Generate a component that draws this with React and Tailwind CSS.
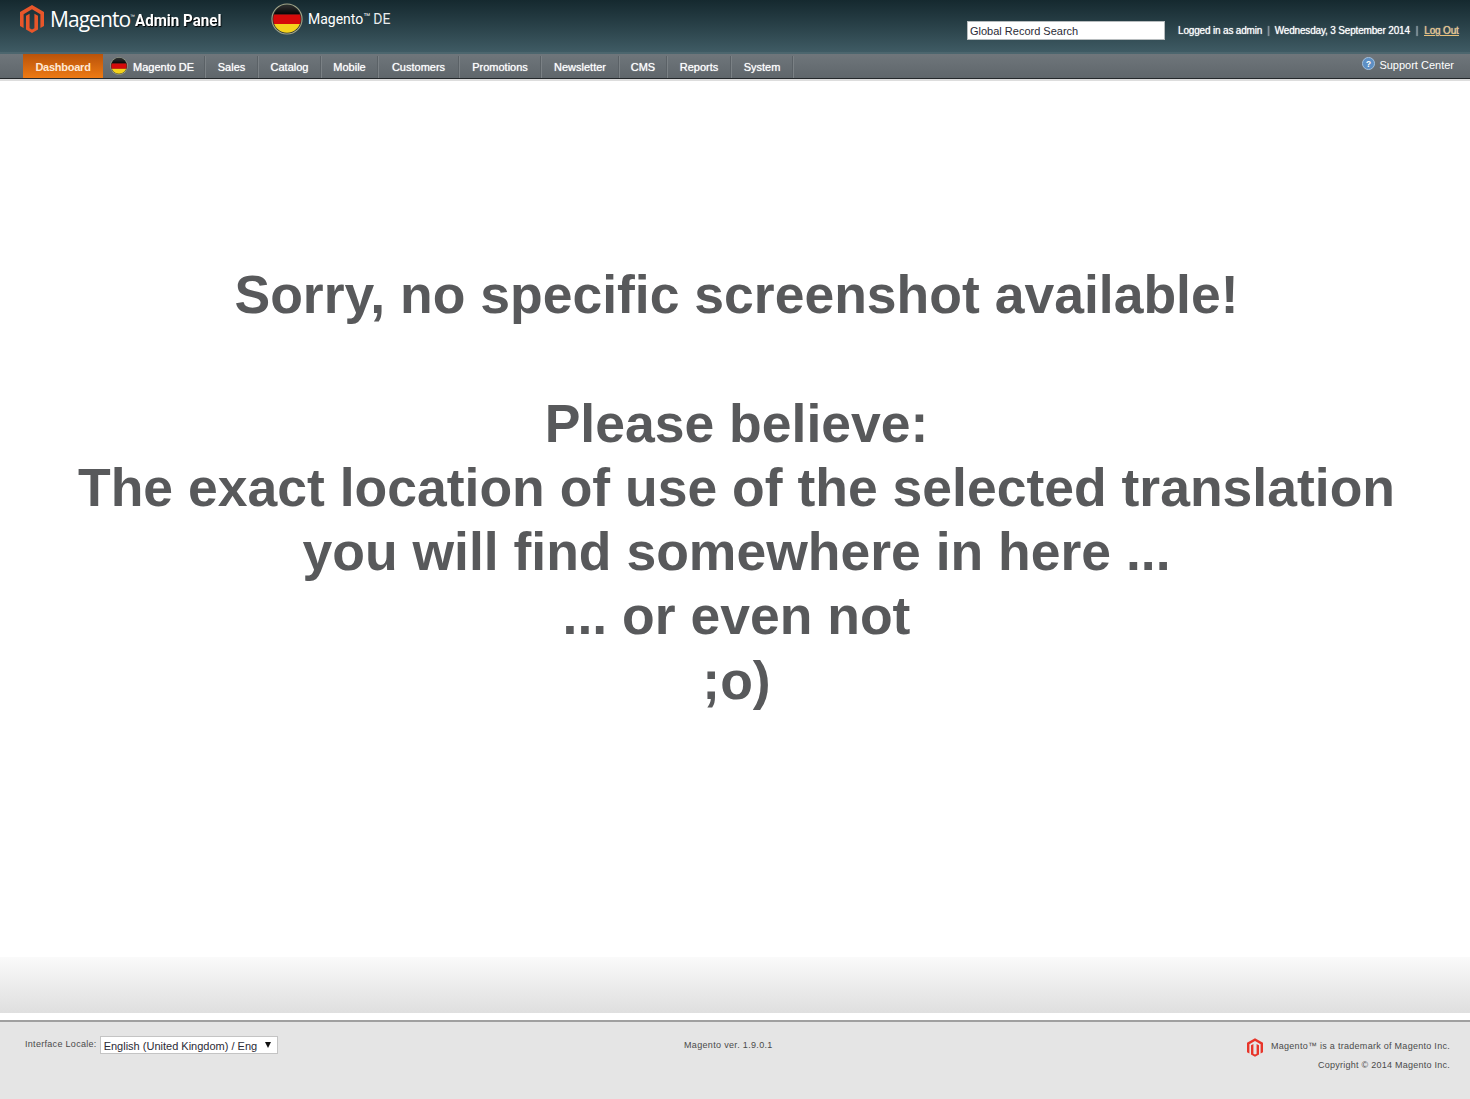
const F = "font-['Liberation_Sans',Arial,sans-serif]";

function MagentoMark({ className, color }) {
  return (
    <svg viewBox="0 0 24 28" className={className}>
      <path fill={color} d="M12 0 L24 7 V21 L20.4 23.1 V9.2 L12 4.3 L3.6 9.2 V23.1 L0 21 V7 Z" />
      <path fill={color} d="M6 10.8 L9.6 8.8 V23.2 L12 24.6 L14.4 23.2 V8.8 L18 10.8 V24.5 L12 28 L6 24.5 Z" />
    </svg>
  );
}

function Flag({ className, id }) {
  return (
    <svg viewBox="0 0 32 32" className={className}>
      <defs>
        <clipPath id={id}><circle cx="16" cy="16" r="13.8" /></clipPath>
        <linearGradient id={id + "g"} x1="0" y1="0" x2="0" y2="1">
          <stop offset="0" stopColor="#ffffff" stopOpacity="0.2" />
          <stop offset="0.35" stopColor="#ffffff" stopOpacity="0" />
        </linearGradient>
      </defs>
      <circle cx="16" cy="16" r="15.6" fill="#a3a58a" />
      <circle cx="16" cy="16" r="14.5" fill="#26302c" />
      <g clipPath={`url(#${id})`}>
        <rect x="0" y="0" width="32" height="11.5" fill="#070707" />
        <rect x="0" y="11.5" width="32" height="9.5" fill="#d50a0a" />
        <rect x="0" y="21" width="32" height="11" fill="#f4d21c" />
        <rect x="0" y="0" width="32" height="32" fill={`url(#${id}g)`} />
      </g>
    </svg>
  );
}

const navItems = [
  ["Sales", "w-[51px]"],
  ["Catalog", "w-[61px]"],
  ["Mobile", "w-[55px]"],
  ["Customers", "w-[79px]"],
  ["Promotions", "w-[80px]"],
  ["Newsletter", "w-[76px]"],
  ["CMS", "w-[46px]"],
  ["Reports", "w-[62px]"],
  ["System", "w-[60px]"],
];

const Sep = () => <div className="w-[2px] h-[22px] self-end bg-gradient-to-r from-[#4b5257] to-[#8b9195]" />;

export default function App() {
  return (
    <div className={`${F} w-[1470px] h-[1099px] bg-white flex flex-col overflow-hidden`}>
      <header className="h-[52px] shrink-0 bg-gradient-to-b from-[#15292f] to-[#3f5b64] flex">
        <div className="w-[271px] shrink-0 flex items-start pl-[20px] pt-[5px]">
          <MagentoMark className="w-[24px] h-[28px]" color="#e8562a" />
          <span className="ml-[6px] mt-[2px] text-[21px] leading-[24px] tracking-[-0.95px] text-white font-['Open_Sans',sans-serif]">Magento</span>
          <span className="text-[5px] leading-[8px] text-white mt-[7px]">™</span>
          <span className="mt-[6px] text-[16px] leading-[20px] font-bold text-white font-['Roboto',sans-serif] [text-shadow:1px_1px_1px_#000] scale-x-[0.945] origin-left whitespace-nowrap">Admin Panel</span>
        </div>
        <div className="flex items-start pt-[3px] w-[696px] shrink-0">
          <Flag className="w-[32px] h-[32px]" id="f1" />
          <span className="ml-[5px] mt-[6px] text-[14px] leading-[20px] text-white font-['Roboto',sans-serif]">Magento</span>
          <span className="text-[7px] leading-[10px] text-white mt-[8px]">™</span>
          <span className="ml-[3px] mt-[6px] text-[14px] leading-[20px] text-[#e8eced] font-['Roboto',sans-serif]">DE</span>
        </div>
        <div className="w-[198px] h-[19px] mt-[21px] shrink-0 bg-white border border-[#b7bcbe] pl-[2px] text-[11px] leading-[18px] text-[#2b2b36]">Global Record Search</div>
        <div className="ml-[13px] mt-[24px] flex items-start text-[10px] leading-[13px] tracking-[-0.17px] whitespace-nowrap text-white [text-shadow:0_0_1px_#dfe8ea]">
          <span>Logged in as admin</span>
          <span className="mx-[5px] text-[#7f9198]">|</span>
          <span>Wednesday, 3 September 2014</span>
          <span className="mx-[6px] text-[#7f9198]">|</span>
          <span className="text-[#eabf78] underline">Log Out</span>
        </div>
      </header>

      <div className="h-[2px] shrink-0 bg-[#4c666e]" />

      <nav className="h-[24px] shrink-0 bg-gradient-to-b from-[#6f767b] to-[#5f666b] flex items-stretch pl-[23px] text-[11px] leading-[24px] text-white whitespace-nowrap">
        <div className="w-[80px] shrink-0 pt-[1px] flex items-center justify-center font-bold tracking-[-0.25px] bg-gradient-to-b from-[#b9530a] to-[#ee7a14] text-[#ffe9d6]">Dashboard</div>
        <div className="w-[101px] shrink-0 flex items-center pl-[7px]">
          <Flag className="w-[18px] h-[18px]" id="f2" />
          <span className="ml-[5px] pt-[1px] [text-shadow:0_0_1px_#e4e8ea]">Magento DE</span>
        </div>
        <Sep />
        {navItems.map(([n, w]) => (
          <div key={n} className="contents">
            <div className={`${w} shrink-0 pt-[1px] flex items-center justify-center [text-shadow:0_0_1px_#e4e8ea]`}>{n}</div>
            <Sep />
          </div>
        ))}
        <div className="ml-auto pr-[16px] flex items-start pt-[4px] text-[11px] leading-[15px]">
          <svg viewBox="0 0 14 14" className="w-[13px] h-[13px] mt-[-1px] mr-[4px]">
            <circle cx="7" cy="7" r="6.5" fill="#5d8fc4" stroke="#a9c6e2" />
            <text x="7" y="10.4" textAnchor="middle" fontSize="9" fontWeight="700" fill="#fff" fontFamily="Liberation Sans">?</text>
          </svg>
          Support Center
        </div>
      </nav>

      <div className="h-[1px] shrink-0 bg-[#24282b]" />
      <div className="h-[2px] shrink-0 bg-[#dddddd]" />

      <main className="flex-1 flex flex-col">
        <div className="h-[182px] shrink-0" />
        <div className="text-center font-bold text-[53.5px] leading-[64.3px] text-[#58595b] pl-[3px]">
          <div>Sorry, no specific screenshot available!</div>
          <div>&nbsp;</div>
          <div>Please believe:</div>
          <div>The exact location of use of the selected translation</div>
          <div>you will find somewhere in here ...</div>
          <div>... or even not</div>
          <div>;o)</div>
        </div>
        <div className="mt-auto h-[56px] bg-gradient-to-b from-[#fafafa] to-[#dfdfdf]" />
      </main>

      <div className="h-[7px] shrink-0 bg-white" />
      <div className="h-[2px] shrink-0 bg-[#a0a0a0]" />
      <footer className="h-[77px] shrink-0 bg-[#e5e5e5] flex items-start text-[9px] leading-[13px] text-[#4a4a4a]">
        <div className="w-[684px] shrink-0 pl-[25px] pt-[14px] flex items-start">
          <span className="mt-[2px] tracking-[0.3px]">Interface Locale:</span>
          <div className="ml-[3px] w-[178px] h-[18px] bg-white border border-[#c4c4c4] flex items-center pl-[3px] pr-[6px] text-[11px] leading-[16px] text-[#2b2b36] whitespace-nowrap">
            <span className="flex-1 pt-[1px]">English (United Kingdom) / Eng</span>
            <span className="w-0 h-0 border-l-[3px] border-r-[3px] border-t-[6px] border-l-transparent border-r-transparent border-t-[#111]" />
          </div>
        </div>
        <div className="pt-[17px] tracking-[0.33px]">Magento ver. 1.9.0.1</div>
        <div className="ml-auto pr-[20px] pt-[16px] text-right">
          <div className="flex items-start justify-end">
            <MagentoMark className="w-[16px] h-[19px] mr-[8px]" color="#e8352a" />
            <span className="tracking-[0.28px] mt-[2px]">Magento™ is a trademark of Magento Inc.</span>
          </div>
          <div className="mt-[2px] tracking-[0.25px]">Copyright © 2014 Magento Inc.</div>
        </div>
      </footer>
    </div>
  );
}
